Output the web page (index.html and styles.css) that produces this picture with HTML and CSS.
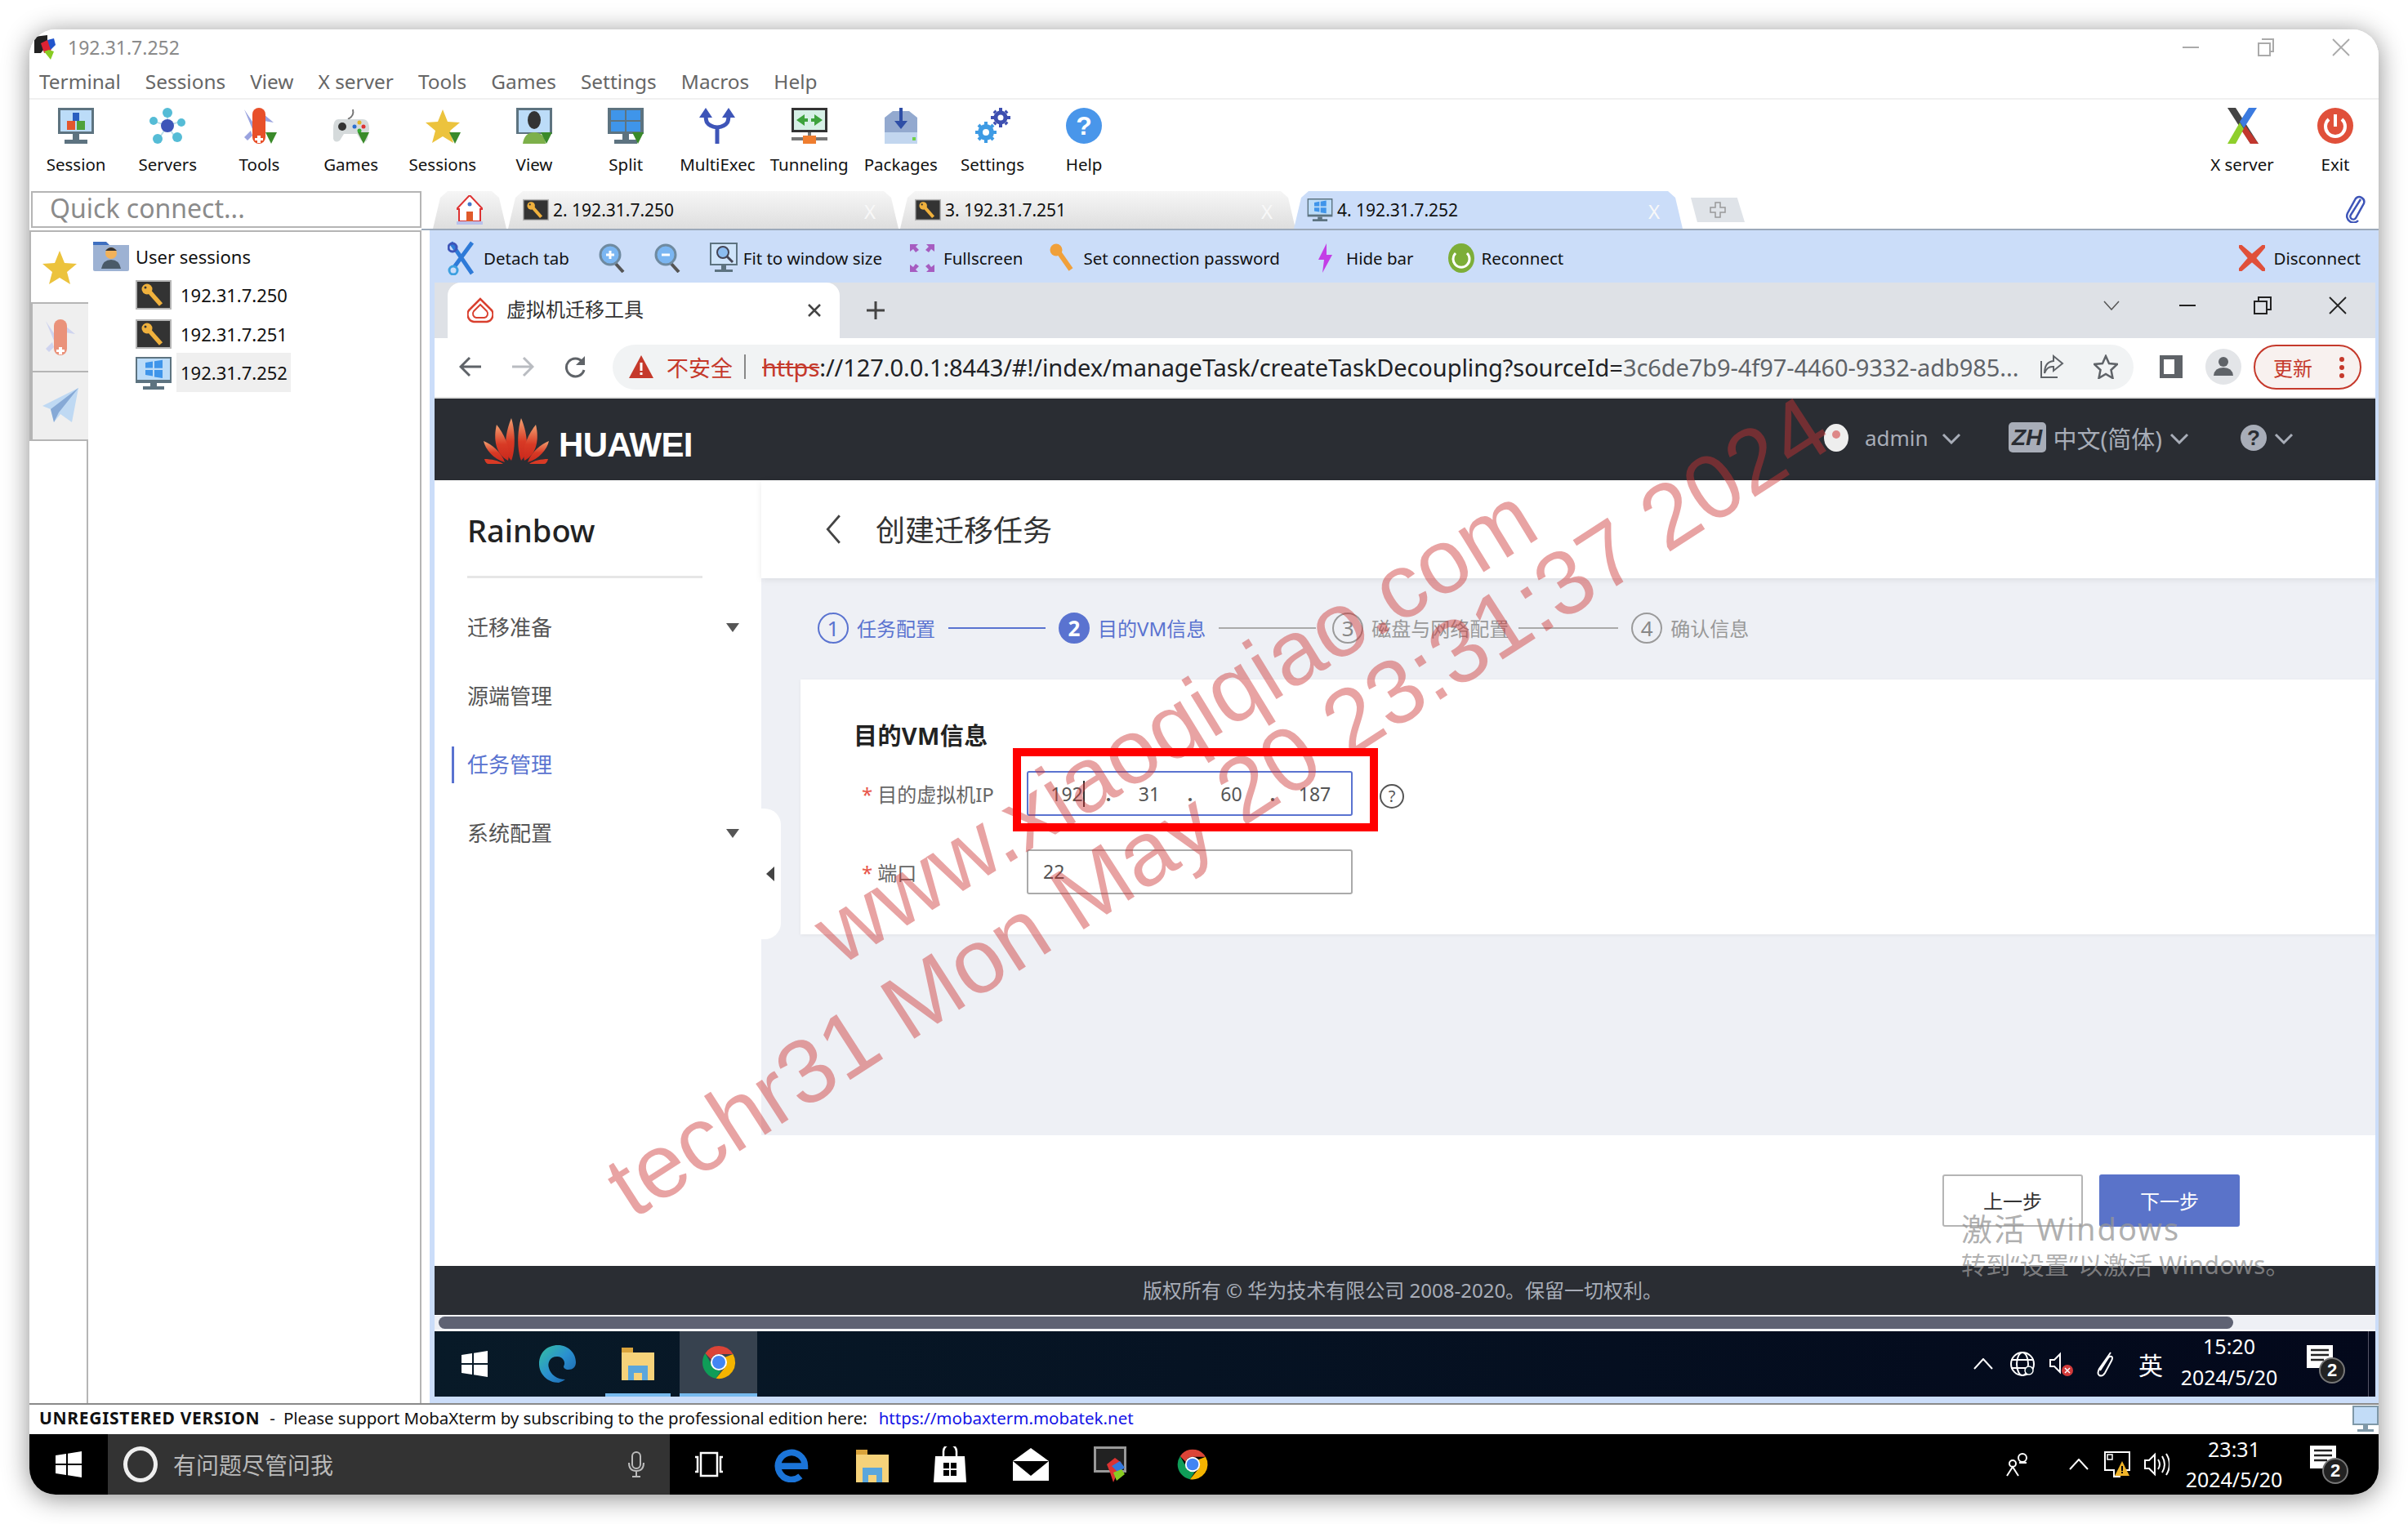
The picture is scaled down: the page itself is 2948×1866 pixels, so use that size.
FILE: index.html
```html
<!DOCTYPE html>
<html lang="zh">
<head>
<meta charset="utf-8">
<title>192.31.7.252</title>
<link rel="stylesheet" href="styles.css">
</head>
<body>
<svg class="defs" xmlns="http://www.w3.org/2000/svg">
  <defs>
    <linearGradient id="edgeg" x1="0" y1="0" x2="1" y2="1"><stop offset="0" stop-color="#35c1a0"/><stop offset=".5" stop-color="#2a90d0"/><stop offset="1" stop-color="#1a5fa8"/></linearGradient>
    <linearGradient id="petal" x1="0" y1="0" x2="0" y2="1"><stop offset="0" stop-color="#f2a070"/><stop offset=".55" stop-color="#d83a25"/><stop offset="1" stop-color="#c9281c"/></linearGradient>
    <symbol id="key" viewBox="0 0 44 36"><rect width="44" height="36" fill="#b5b5b5"/><rect x="2" y="2" width="40" height="32" fill="#333"/><path d="M16 13l15 17" stroke="#f0b13d" stroke-width="5.500"/><circle cx="14" cy="11" r="6.500" fill="#f0b13d"/><circle cx="12" cy="9" r="1.500" fill="#333"/></symbol>
    <symbol id="winmon" viewBox="0 0 44 40"><path d="M0 0h44v32H0z" fill="#5d7380"/><path d="M2 2h40v26H2z" fill="#bcdcf8"/><path d="M12 7l9-1.500v8h-9zM23 5.200l10-1.500v10H23zM12 16h9v7.500l-9-1.500zM23 16h10v10l-10-1.500z" fill="#3f95ea"/><path d="M18 32h8v4h-8zM9 36h26v4H9z" fill="#5d7380"/></symbol>
    <symbol id="tri" viewBox="0 0 14 14"><path d="M0 0h14L7 14z" fill="#3a8a2a"/></symbol>
    <symbol id="chrome" viewBox="0 0 24 24"><path d="M12 2a10 10 0 0 1 8.700 5H12a5 5 0 0 0-4.700 3.200L3.700 6.500A10 10 0 0 1 12 2z" fill="#db4437"/><path d="M2 12a10 10 0 0 1 1.700-5.500L8 14a5 5 0 0 0 5.500 3L10.300 21.900A10 10 0 0 1 2 12z" fill="#0f9d58"/><path d="M20.700 7A10 10 0 0 1 10.300 21.900L15.500 15.500a5 5 0 0 0 0-6.500z" fill="#f4b400"/><circle cx="12" cy="12" r="5" fill="#fff"/><circle cx="12" cy="12" r="4" fill="#4285f4"/></symbol>
    <symbol id="winlogo" viewBox="0 0 32 32"><path d="M0 5l13-2v12H0zM15 2.700L32 0v15H15zM0 17h13v12L0 27zM15 17h17v15l-17-2.700z" fill="#fff"/></symbol>
    <symbol id="folder" viewBox="0 0 44 44"><path d="M2 4h14v6h26v34H2z" fill="#f6d27a"/><path d="M2 4h14v6H2z" fill="#d9a33c"/><path d="M10 26h24v18h-7v-9h-10v9h-7z" fill="#5aa6dc"/></symbol>
    <symbol id="notif" viewBox="0 0 50 50"><path d="M0 0h32v28H24l-8 8v-8H0z" fill="#fff" transform="translate(0 2)"/><path d="M5 8h22M5 14h22M5 20h16" stroke="#222" stroke-width="2.500"/><circle cx="31" cy="33" r="15" fill="#222" stroke="#777" stroke-width="2"/></symbol>
  </defs>
</svg>

<div class="win">
  <header class="titlebar">
    <svg class="ttl-ic" viewBox="0 0 30 30"><path d="M0 2l16-2v12L8 22H0z" fill="#222"/><path d="M8 10l8-4 6 4-2 10-8 2z" fill="#d23"/><path d="M16 6l8-2 2 8-6 6z" fill="#25c"/><path d="M12 20l6-2 6 2-4 10z" fill="#8c2"/></svg>
    <span class="ttl-text">192.31.7.252</span>
    <span class="spacer"></span>
    <svg class="wc wc1" viewBox="0 0 22 22"><path d="M1 11h20" stroke="#aaa" stroke-width="2"/></svg>
    <svg class="wc wc2" viewBox="0 0 22 22"><path d="M6 1h14v15h-4M2 6h14v15H2z" fill="none" stroke="#aaa" stroke-width="2"/></svg>
    <svg class="wc wc3" viewBox="0 0 22 22"><path d="M1 1l20 20M21 1L1 21" stroke="#aaa" stroke-width="1.800"/></svg>
  </header>
  <nav class="menubar">
    <span>Terminal</span><span>Sessions</span><span>View</span><span>X server</span><span>Tools</span><span>Games</span><span>Settings</span><span>Macros</span><span>Help</span>
  </nav>
  <div class="toolbar">
    <div class="tool"><svg class="ti" viewBox="0 0 44 44"><path d="M0 0h44v32H0z" fill="#5d7380"/><path d="M3 3h38v26H3z" fill="#bcdcf8"/><path d="M18 6h8v10h-8z" fill="#2b5fc0"/><path d="M11 16h10v11H11z" fill="#e4572e"/><path d="M23 16h10v11H23z" fill="#4fa23a"/><path d="M18 32h8v7h-8zM8 39h28v5H8z" fill="#5d7380"/></svg><span>Session</span></div>
    <div class="tool"><svg class="ti" viewBox="0 0 44 44"><path d="M22 6v16M4 16l18 6M40 16l-18 6M10 40l12-18M34 40L22 22" stroke="#bfe0ea" stroke-width="2"/><circle cx="22" cy="22" r="8" fill="#3e55b8"/><circle cx="22" cy="6" r="6" fill="#55bcd6"/><circle cx="5" cy="16" r="5" fill="#55bcd6"/><circle cx="39" cy="18" r="5" fill="#55bcd6"/><circle cx="10" cy="38" r="6" fill="#55bcd6"/><circle cx="34" cy="36" r="6" fill="#55bcd6"/></svg><span>Servers</span></div>
    <div class="tool"><svg class="ti" viewBox="0 0 44 44"><path d="M4 2l12 18-2 6zM40 18L28 8v8zM4 36l8-8 2 6-6 6z" fill="#9aa3df"/><rect x="14" y="0" width="16" height="44" rx="8" fill="#e8502a"/><path d="M20 34h4v3h3v3h-3v3h-4v-3h-3v-3h3z" fill="#fff"/><use href="#tri" x="30" y="30" width="14" height="14"/></svg><span>Tools</span></div>
    <div class="tool"><svg class="ti" viewBox="0 0 44 44"><path d="M24 2q2 8-6 12" fill="none" stroke="#777" stroke-width="2"/><path d="M6 14h30q8 0 8 12l-2 12q-2 6-8 2l-5-8H13l-5 8q-6 4-8-2v-12Q0 14 6 14z" fill="#d5dadb"/><circle cx="11" cy="23" r="5" fill="#333"/><circle cx="26" cy="23" r="2.500" fill="#2b6fd0"/><circle cx="32" cy="18" r="2.500" fill="#e2b52a"/><circle cx="37" cy="23" r="2.500" fill="#d33"/><circle cx="32" cy="28" r="2.500" fill="#3a3"/><use href="#tri" x="30" y="30" width="14" height="14"/></svg><span>Games</span></div>
    <div class="tool"><svg class="ti" viewBox="0 0 44 44"><path d="M22 2l6 15 15 1-12 10 4 15-13-8-13 8 4-15L1 18l15-1z" fill="#ecc33d"/><use href="#tri" x="30" y="30" width="14" height="14"/></svg><span>Sessions</span></div>
    <div class="tool"><svg class="ti" viewBox="0 0 44 44"><path d="M0 0h44v32H0z" fill="#5d7380"/><path d="M3 3h38v27H3z" fill="#bcdcf8"/><ellipse cx="22" cy="15" rx="8" ry="11" fill="#333"/><path d="M8 44q2-14 14-14t14 14z" fill="#7db04a"/><use href="#tri" x="30" y="30" width="14" height="14"/></svg><span>View</span></div>
    <div class="tool"><svg class="ti" viewBox="0 0 44 44"><path d="M0 0h44v32H0z" fill="#5d7380"/><path d="M4 3h17v12H4zM23 3h17v12H23zM4 17h17v12H4zM23 17h17v12H23z" fill="#3f95ea"/><path d="M18 32h8v7h-8zM8 39h28v5H8z" fill="#5d7380"/><use href="#tri" x="30" y="30" width="14" height="14"/></svg><span>Split</span></div>
    <div class="tool"><svg class="ti" viewBox="0 0 44 44"><path d="M22 44V24M22 24C8 22 8 16 8 8M22 24c14-2 14-8 14-16" fill="none" stroke="#3e55b8" stroke-width="5"/><path d="M8 0l8 12H0zM36 0l8 12H28z" fill="#3e55b8"/></svg><span>MultiExec</span></div>
    <div class="tool"><svg class="ti" viewBox="0 0 44 44"><path d="M0 0h44v30H0z" fill="#333"/><path d="M3 3h38v24H3z" fill="#d6f0e6"/><path d="M6 15l10-7v5h4v4h-4v5zM38 15l-10-7v5h-4v4h4v5z" fill="#3da23c"/><path d="M20 30h4v6h-4zM0 36h44v4H0z" fill="#777"/><path d="M14 34h16v10H14z" fill="#ef7d2f"/></svg><span>Tunneling</span></div>
    <div class="tool"><svg class="ti" viewBox="0 0 44 44"><path d="M2 12l10-8h20l10 8v20H2z" fill="#93a9cf"/><path d="M2 30h40v14H2z" fill="#c2d6ef"/><path d="M36 36h4v4h-4z" fill="#6fd048"/><path d="M20 0h4v16h6l-8 10-8-10h6z" fill="#2e4ea6"/></svg><span>Packages</span></div>
    <div class="tool"><svg class="ti" viewBox="0 0 44 44"><g fill="none" stroke="#3e9be4" stroke-width="6"><circle cx="14" cy="30" r="7"/><path stroke-width="4" d="M14 17v4M14 39v4M1 30h4M23 30h4M5 21l3 3M20 36l3 3M23 21l-3 3M8 36l-3 3"/></g><g fill="none" stroke="#3e4fb0" stroke-width="5"><circle cx="32" cy="12" r="6"/><path stroke-width="4" d="M32 0v4M32 20v4M20 12h4M40 12h4M24 4l2 2M38 18l2 2M40 4l-2 2M26 18l-2 2"/></g></svg><span>Settings</span></div>
    <div class="tool"><svg class="ti" viewBox="0 0 44 44"><circle cx="22" cy="22" r="22" fill="#4996ea"/><text x="22" y="33" text-anchor="middle" class="help-q">?</text></svg><span>Help</span></div>
    <span class="spacer"></span>
    <div class="tool tool-x"><svg class="ti" viewBox="0 0 44 44"><path d="M4 0h10l28 44H32z" fill="#444"/><path d="M30 0h10L24 25l-5-8z" fill="#3b7be0"/><path d="M4 44h10l10-18-5-8z" fill="#8fcf2c"/><path d="M26 22l16 22H32l-10-15z" fill="#d8352a" opacity=".85"/></svg><span>X server</span></div>
    <div class="tool tool-exit"><svg class="ti" viewBox="0 0 44 44"><circle cx="22" cy="22" r="22" fill="#e0503a"/><path d="M14 14a12 12 0 1 0 16 0" fill="none" stroke="#fff" stroke-width="4"/><path d="M22 8v15" stroke="#fff" stroke-width="4"/></svg><span>Exit</span></div>
  </div>

  <div class="tabrow">
    <div class="quick">Quick connect...</div>
    <div class="tabs">
      <div class="tab tab-home"><svg class="home-ic" viewBox="0 0 32 36"><path d="M16 0L0 17h3v15h26V17h3z" fill="#fff" stroke="#d33" stroke-width="2"/><path d="M12 20h8v13h-8z" fill="#e05a2b"/><circle cx="16" cy="11" r="2.500" fill="#47c"/><path d="M0 32h32v4H0z" fill="#b9c1ea"/></svg></div>
      <div class="tab tab-s"><svg class="tab-ic"><use href="#key"/></svg><span>2. 192.31.7.250</span><i class="tab-x">X</i></div>
      <div class="tab tab-s"><svg class="tab-ic"><use href="#key"/></svg><span>3. 192.31.7.251</span><i class="tab-x">X</i></div>
      <div class="tab tab-s tab-active"><svg class="tab-ic"><use href="#winmon"/></svg><span>4. 192.31.7.252</span><i class="tab-x">X</i></div>
      <div class="tab tab-new"><svg class="plus-ic" viewBox="0 0 20 20"><path d="M7 1h6v6h6v6h-6v6H7v-6H1V7h6z" fill="none" stroke="#999" stroke-width="1.500"/></svg></div>
      <span class="spacer"></span>
      <svg class="clip" viewBox="0 0 24 34"><path d="M18 5L6 24a3.500 3.500 0 0 0 6 4L22 10a6 6 0 0 0-10-6L2 22a8 8 0 0 0 13 9" fill="none" stroke="#3e55b8" stroke-width="2.500"/></svg>
    </div>
  </div>

  <div class="mainrow">
    <aside class="leftpane">
      <div class="side-tabs">
        <div class="stab stab-on"><svg class="stab-ic" viewBox="0 0 44 44"><path d="M22 2l6 15 15 1-12 10 4 15-13-8-13 8 4-15L1 18l15-1z" fill="#ecc33d"/></svg></div>
        <div class="stab"><svg class="stab-ic" viewBox="0 0 44 44"><path d="M4 2l12 18-2 6zM40 18L28 8v8zM4 36l8-8 2 6-6 6z" fill="#cfd4ef"/><rect x="14" y="0" width="16" height="44" rx="8" fill="#ea927a"/><path d="M20 34h4v3h3v3h-3v3h-4v-3h-3v-3h3z" fill="#fff"/></svg></div>
        <div class="stab"><svg class="stab-ic" viewBox="0 0 44 44"><path d="M44 0L0 22l10 4 4 16 8-10 14 10z" fill="#bfd9f3"/><path d="M44 0L10 26l4 16 6-12z" fill="#86a9d6"/></svg></div>
      </div>
      <div class="tree">
        <div class="node-root"><svg class="folder-ic" viewBox="0 0 44 36"><path d="M0 0h16l4 4H0z" fill="#3e6fc0"/><path d="M0 4h44v30q0 2-2 2H2q-2 0-2-2z" fill="#9db2d3"/><circle cx="22" cy="14" r="7" fill="#f2b25a"/><path d="M15 11q7-8 14 0z" fill="#333"/><path d="M10 33q2-11 12-11t12 11z" fill="#4a5a68"/></svg><span>User sessions</span></div>
        <div class="node"><svg class="node-ic"><use href="#key"/></svg><span class="node-t">192.31.7.250</span></div>
        <div class="node"><svg class="node-ic"><use href="#key"/></svg><span class="node-t">192.31.7.251</span></div>
        <div class="node node-sel"><svg class="node-ic"><use href="#winmon"/></svg><span class="node-t">192.31.7.252</span></div>
      </div>
    </aside>

    <section class="remote">
      <div class="sessbar">
        <svg class="sb-ic sb-a" viewBox="0 0 34 42"><path d="M30 2L8 32M4 2l26 38" stroke="#2e7ad8" stroke-width="5" fill="none"/><circle cx="6" cy="8" r="5" fill="none" stroke="#3e55b8" stroke-width="3"/><circle cx="7" cy="36" r="5" fill="none" stroke="#3da0e0" stroke-width="3"/></svg><span class="sb-t sb-detach">Detach tab</span>
        <svg class="sb-ic sb-zi" viewBox="0 0 32 36"><path d="M20 24l10 11" stroke="#555" stroke-width="4"/><circle cx="14" cy="14" r="12" fill="#7bb6f2" stroke="#6f8aa0" stroke-width="3"/><path d="M9 14h10M14 9v10" stroke="#fff" stroke-width="3"/></svg>
        <svg class="sb-ic sb-zo" viewBox="0 0 32 36"><path d="M20 24l10 11" stroke="#555" stroke-width="4"/><circle cx="14" cy="14" r="12" fill="#7bb6f2" stroke="#6f8aa0" stroke-width="3"/><path d="M9 14h10" stroke="#fff" stroke-width="3"/></svg>
        <svg class="sb-ic sb-fit" viewBox="0 0 34 38"><path d="M0 0h34v28H0z" fill="#5d7380"/><path d="M2 2h30v24H2z" fill="#cfe4fa"/><circle cx="16" cy="12" r="7" fill="#8cbcf0" stroke="#445" stroke-width="2"/><path d="M21 17l7 7" stroke="#445" stroke-width="3"/><path d="M14 28h6v5h-6zM6 33h22v3H6z" fill="#5d7380"/></svg><span class="sb-t sb-fitt">Fit to window size</span>
        <svg class="sb-ic sb-full" viewBox="0 0 30 34"><path d="M0 0h10L7 3l4 4-4 3-3-4-4 3zM30 0H20l3 3-4 4 4 3 3-4 4 3zM0 34h10l-3-3 4-4-4-3-3 4-4-3zM30 34H20l3-3-4-4 4-3 3 4 4-3z" fill="#a65cc0"/></svg><span class="sb-t sb-fullt">Fullscreen</span>
        <svg class="sb-ic sb-key" viewBox="0 0 30 36"><path d="M12 12l14 20" stroke="#f0a03a" stroke-width="6"/><circle cx="8" cy="8" r="7.500" fill="#f0a03a"/></svg><span class="sb-t sb-pass">Set connection password</span>
        <svg class="sb-ic sb-bolt" viewBox="0 0 18 36"><path d="M10 0L0 20h7L5 36l12-22h-7z" fill="#c33ee6"/></svg><span class="sb-t sb-hide">Hide bar</span>
        <svg class="sb-ic sb-rec" viewBox="0 0 32 36"><ellipse cx="16" cy="18" rx="16" ry="18" fill="#7dae38"/><path d="M9 12a10 10 0 1 0 14 0" fill="none" stroke="#fff" stroke-width="3"/></svg><span class="sb-t sb-rect">Reconnect</span>
        <span class="spacer"></span>
        <svg class="sb-ic sb-disc" viewBox="0 0 32 32"><path d="M2 0l14 12L30 0l2 2-12 14 12 14-2 2-14-12L2 32l-2-2 12-14L0 2z" fill="#e0503a" stroke="#e0503a" stroke-width="2"/></svg><span class="sb-t sb-disct">Disconnect</span>
      </div>

      <div class="screen">
        <div class="ch-strip">
          <div class="ch-tab">
            <svg class="ch-fav" viewBox="0 0 32 32"><path d="M16 2L4 14a9 9 0 0 0 4 16h16a9 9 0 0 0 4-16z" fill="none" stroke="#d9402f" stroke-width="2.500"/><path d="M16 9L8 17a5 5 0 0 0 3 8h10a5 5 0 0 0 3-8z" fill="none" stroke="#d9402f" stroke-width="2"/></svg>
            <span class="ch-title">虚拟机迁移工具</span>
            <svg class="ch-x" viewBox="0 0 16 16"><path d="M1 1l14 14M15 1L1 15" stroke="#444" stroke-width="2.500"/></svg>
          </div>
          <svg class="ch-plus" viewBox="0 0 24 24"><path d="M12 1v22M1 12h22" stroke="#444" stroke-width="3"/></svg>
          <span class="spacer"></span>
          <svg class="ch-chev" viewBox="0 0 20 12"><path d="M1 1l9 10 9-10" fill="none" stroke="#555" stroke-width="1.500"/></svg>
          <svg class="ch-wc wcm" viewBox="0 0 22 22"><path d="M1 11h20" stroke="#222" stroke-width="2"/></svg>
          <svg class="ch-wc wcr" viewBox="0 0 22 22"><path d="M6 5V1h15v15h-5M1 6h15v15H1z" fill="none" stroke="#222" stroke-width="2"/></svg>
          <svg class="ch-wc wcc" viewBox="0 0 22 22"><path d="M1 1l20 20M21 1L1 21" stroke="#222" stroke-width="1.800"/></svg>
        </div>
        <div class="ch-addr">
          <svg class="nav nav-b" viewBox="0 0 28 28"><path d="M27 14H3M13 3L2 14l11 11" fill="none" stroke="#5f6368" stroke-width="3"/></svg>
          <svg class="nav nav-f" viewBox="0 0 28 28"><path d="M1 14h24M15 3l11 11-11 11" fill="none" stroke="#b9bcc1" stroke-width="3"/></svg>
          <svg class="nav nav-r" viewBox="0 0 28 28"><path d="M23 8a11 11 0 1 0 2 10" fill="none" stroke="#5f6368" stroke-width="3"/><path d="M26 1v11H15z" fill="#5f6368"/></svg>
          <div class="urlbar">
            <svg class="warn" viewBox="0 0 30 28"><path d="M15 0l15 28H0z" fill="#c5392b"/><path d="M13.500 9h3v10h-3zM13.500 21h3v3h-3z" fill="#fff"/></svg>
            <span class="insecure">不安全</span>
            <i class="sep"></i>
            <span class="url"><s class="https">https</s>://127.0.0.1:8443/#!/index/manageTask/createTaskDecoupling?sourceId=<span class="url-dim">3c6de7b9-4f97-4460-9332-adb985...</span></span>
            <span class="spacer"></span>
            <svg class="ub-ic ub-share" viewBox="0 0 30 30"><path d="M17 2l11 9-11 9v-5q-8-1-11 8 0-14 11-15zM2 8v20h20" fill="none" stroke="#5f6368" stroke-width="2"/></svg>
            <svg class="ub-ic ub-star" viewBox="0 0 30 30"><path d="M15 2l4 9 10 1-7.500 7 2 10L15 24l-8.500 5 2-10L1 12l10-1z" fill="none" stroke="#5f6368" stroke-width="2.500"/></svg>
          </div>
          <svg class="panel-ic" viewBox="0 0 28 28"><path d="M0 0h28v28H0z" fill="#5f6368"/><path d="M5 5h13v18H5z" fill="#fff"/></svg>
          <svg class="avatar" viewBox="0 0 44 44"><circle cx="22" cy="22" r="22" fill="#e3e5e8"/><circle cx="22" cy="16" r="6" fill="#5f6368"/><path d="M10 33q1-10 12-10t12 10z" fill="#5f6368"/></svg>
          <div class="update"><span class="upd-t">更新</span><span class="upd-dots"></span></div>
        </div>
        <div class="hw-head">
          <svg class="hw-flower" viewBox="0 0 80 56"><path d="M34 52C22 40 28 14 34 0c4 12 6 36 0 52z" fill="url(#petal)"/><path d="M46 52c12-12 6-38 0-52-4 12-6 36 0 52z" fill="url(#petal)"/><path d="M30 52C14 44 12 24 16 8c8 10 18 28 14 44z" fill="url(#petal)"/><path d="M50 52c16-8 18-28 14-44-8 10-18 28-14 44z" fill="url(#petal)"/><path d="M26 54C12 50 2 38 0 28c10 4 22 14 26 26z" fill="url(#petal)"/><path d="M54 54c14-4 24-16 26-26-10 4-22 14-26 26z" fill="url(#petal)"/><path d="M24 56H6c-2 0-4-2-5-6 8 0 18 2 23 6zM56 56h18c2 0 4-2 5-6-8 0-18 2-23 6z" fill="#d83a25"/></svg>
          <span class="hw-name">HUAWEI</span>
          <span class="spacer"></span>
          <svg class="hw-av" viewBox="0 0 30 34"><ellipse cx="15" cy="17" rx="15" ry="17" fill="#eee"/><circle cx="15" cy="13" r="5" fill="#d88"/></svg>
          <span class="hw-admin">admin</span>
          <svg class="hw-chev hc1" viewBox="0 0 24 14"><path d="M2 2l10 10 10-10" fill="none" stroke="#a8adb8" stroke-width="3"/></svg>
          <span class="hw-zh">ZH</span>
          <span class="hw-lang">中文(简体)</span>
          <svg class="hw-chev hc2" viewBox="0 0 24 14"><path d="M2 2l10 10 10-10" fill="none" stroke="#a8adb8" stroke-width="3"/></svg>
          <span class="hw-q">?</span>
          <svg class="hw-chev hc3" viewBox="0 0 24 14"><path d="M2 2l10 10 10-10" fill="none" stroke="#a8adb8" stroke-width="3"/></svg>
        </div>
        <div class="hw-body">
          <aside class="hw-side">
            <div class="brand">Rainbow</div>
            <div class="side-rule"></div>
            <div class="mi">迁移准备<i class="caret"></i></div>
            <div class="mi">源端管理</div>
            <div class="mi mi-on">任务管理</div>
            <div class="mi">系统配置<i class="caret"></i></div>
            <div class="handle"><i class="handle-tri"></i></div>
          </aside>
          <div class="hw-content">
            <div class="page-head">
              <svg class="back" viewBox="0 0 18 34"><path d="M16 2L3 17l13 15" fill="none" stroke="#444" stroke-width="2.500"/></svg>
              <h1>创建迁移任务</h1>
            </div>
            <div class="page-main">
              <div class="steps">
                <i class="st st-done">1</i><span class="sl sl-on">任务配置</span><i class="ln ln-on"></i>
                <i class="st st-cur">2</i><span class="sl sl-on">目的VM信息</span><i class="ln ln-2"></i>
                <i class="st">3</i><span class="sl">磁盘与网络配置</span><i class="ln ln-3"></i>
                <i class="st">4</i><span class="sl">确认信息</span>
              </div>
              <div class="card">
                <h2>目的VM信息</h2>
                <div class="frow frow-ip">
                  <label class="flabel"><b>*</b>目的虚拟机IP</label>
                  <div class="ipbox">
                    <span class="oct oct-cur">192<i class="cursor"></i></span><span class="dot">.</span>
                    <span class="oct">31</span><span class="dot">.</span>
                    <span class="oct">60</span><span class="dot">.</span>
                    <span class="oct">187</span>
                    <div class="redbox"></div>
                  </div>
                  <span class="qmark">?</span>
                </div>
                <div class="frow frow-port">
                  <label class="flabel"><b>*</b>端口</label>
                  <div class="portbox">22</div>
                </div>
              </div>
            </div>
            <div class="actions">
              <button class="btn btn-prev">上一步</button>
              <button class="btn btn-next">下一步</button>
            </div>
          </div>
        </div>
        <footer class="hw-foot">版权所有 © 华为技术有限公司 2008-2020。保留一切权利。</footer>
        <div class="hscroll"><div class="hthumb"></div></div>
        <div class="rtask">
          <svg class="rt-win" viewBox="0 0 32 32"><use href="#winlogo"/></svg>
          <div class="rt-cell rt-edge"><svg class="rt-ic" viewBox="0 0 48 48"><path d="M2 24C2 10 12 1 25 1c13 0 22 10 22 21 0 6-4 9-9 9-4 0-6-2-6-4 3-4 0-12-8-12-9 0-12 8-10 14 2 8 10 14 20 14a22 22 0 0 1-8 4C12 47 2 36 2 24z" fill="url(#edgeg)"/></svg></div>
          <div class="rt-cell rt-files"><svg class="rt-ic" viewBox="0 0 44 44"><use href="#folder"/></svg></div>
          <div class="rt-cell rt-chrome"><svg class="rt-ic" viewBox="0 0 24 24"><use href="#chrome"/></svg></div>
          <span class="spacer"></span>
          <svg class="tr tr-up" viewBox="0 0 24 14"><path d="M1 13L12 1l11 12" fill="none" stroke="#fff" stroke-width="2"/></svg>
          <svg class="tr tr-globe" viewBox="0 0 32 32"><circle cx="16" cy="16" r="14" fill="none" stroke="#fff" stroke-width="2"/><ellipse cx="16" cy="16" rx="7" ry="14" fill="none" stroke="#fff" stroke-width="2"/><path d="M2 11h28M2 21h28" stroke="#fff" stroke-width="2"/><circle cx="24" cy="24" r="5" fill="#0a1a28" stroke="#fff" stroke-width="1.500"/></svg>
          <svg class="tr tr-spk" viewBox="0 0 32 32"><path d="M2 11h5l7-7v22l-7-7H2z" fill="none" stroke="#fff" stroke-width="2"/><circle cx="23" cy="24" r="7" fill="#d23a3a"/><path d="M20 21l6 6M26 21l-6 6" stroke="#fff" stroke-width="1.500"/></svg>
          <svg class="tr tr-pen" viewBox="0 0 32 32"><path d="M22 2l-14 20q-3 6 0 8 4 2 7-3l8-15q2-4 0-5-3-1-5 3L9 24" fill="none" stroke="#fff" stroke-width="2"/></svg>
          <span class="rt-ime">英</span>
          <div class="clock rt-clock"><span>15:20</span><span>2024/5/20</span></div>
          <div class="nt"><svg viewBox="0 0 50 50"><use href="#notif"/></svg><span class="nt-n">2</span></div>
        </div>
      </div>
    </section>
  </div>

  <div class="status">
    <b>UNREGISTERED VERSION</b><span class="st-dash">-</span><span class="st-msg">Please support MobaXterm by subscribing to the professional edition here:</span><a class="st-link">https://mobaxterm.mobatek.net</a>
    <span class="spacer"></span>
    <svg class="st-mon" viewBox="0 0 32 34"><path d="M1 1h30v22H1z" fill="#c2dcf7" stroke="#7f98a8" stroke-width="2"/><path d="M13 24h6v5h-6zM6 29h20v3H6z" fill="#7f98a8"/></svg>
  </div>

  <div class="taskbar">
    <div class="tb-start"><svg class="tb-win" viewBox="0 0 32 32"><use href="#winlogo"/></svg></div>
    <div class="tb-search">
      <i class="cortana"></i>
      <span class="tb-ph">有问题尽管问我</span>
      <span class="spacer"></span>
      <svg class="mic" viewBox="0 0 20 32"><rect x="5" y="1" width="10" height="20" rx="5" fill="none" stroke="#bbb" stroke-width="2"/><path d="M1 14q0 10 9 10t9-10M10 24v7M5 31h10" fill="none" stroke="#bbb" stroke-width="2"/></svg>
    </div>
    <div class="tb-apps">
      <svg class="tb-tv" viewBox="0 0 40 32"><path d="M10 2h20v28H10zM3 7H6v18H3M37 7h-3v18h3" fill="none" stroke="#fff" stroke-width="2.500"/></svg>
      <svg class="tb-a tb-e" viewBox="0 0 40 40"><path d="M4 22h30A15 15 0 1 0 29 33" fill="none" stroke="#1b74d8" stroke-width="7"/></svg>
      <svg class="tb-a tb-fld" viewBox="0 0 44 44"><use href="#folder"/></svg>
      <svg class="tb-a" viewBox="0 0 40 44"><path d="M12 12V6a8 8 0 0 1 16 0v6" fill="none" stroke="#fff" stroke-width="2.500"/><path d="M2 12h36l2 32H0z" fill="#fff"/><path d="M12 20h7v7h-7zM21 20h7v7h-7zM12 29h7v7h-7zM21 29h7v7h-7z" fill="#000"/></svg>
      <svg class="tb-a" viewBox="0 0 44 44"><path d="M22 2L44 18v24H0V18z" fill="#fff"/><path d="M0 18h44L22 36z" fill="#000"/></svg>
      <svg class="tb-a" viewBox="0 0 44 44"><path d="M0 0h40v32H0z" fill="#999"/><path d="M3 3h34v26H3z" fill="#222"/><path d="M16 22l10-8 8 6-4 10-6 14-4-12z" fill="#d33"/><path d="M22 24l10-6 6 8-8 6z" fill="#37d"/><path d="M24 32l10-4 4 6-10 8z" fill="#8c2"/></svg>
      <svg class="tb-a" viewBox="0 0 24 24"><use href="#chrome"/></svg>
    </div>
    <span class="spacer"></span>
    <svg class="tr tr-people" viewBox="0 0 32 32"><circle cx="22" cy="8" r="5" fill="none" stroke="#fff" stroke-width="2"/><circle cx="10" cy="15" r="4" fill="none" stroke="#fff" stroke-width="2"/><path d="M3 30l7-11 7 11M18 14l9 0" fill="none" stroke="#fff" stroke-width="2"/></svg>
    <svg class="tr tr-up2" viewBox="0 0 24 14"><path d="M1 13L12 1l11 12" fill="none" stroke="#fff" stroke-width="2"/></svg>
    <svg class="tr tr-net" viewBox="0 0 32 32"><path d="M1 1h30v22H19v8H12V23H1z" fill="none" stroke="#fff" stroke-width="2"/><path d="M4 4h6v6H4z" fill="none" stroke="#fff" stroke-width="1.500"/><path d="M22 12l9 18H13z" fill="#f0b429"/><path d="M21 18h2v6h-2zM21 25h2v2h-2z" fill="#000"/></svg>
    <svg class="tr tr-vol" viewBox="0 0 32 32"><path d="M2 11h5l7-7v24l-7-7H2z" fill="none" stroke="#fff" stroke-width="2"/><path d="M18 10q4 6 0 12M23 6q6 10 0 20M28 3q8 13 0 26" fill="none" stroke="#fff" stroke-width="2"/></svg>
    <div class="clock tb-clock"><span>23:31</span><span>2024/5/20</span></div>
    <div class="nt nt-host"><svg viewBox="0 0 50 50"><use href="#notif"/></svg><span class="nt-n">2</span></div>
  </div>

  <div class="wm">
    <span class="wm1">www.xiaoqiqiao.com</span>
    <span class="wm2">techr31 Mon May 20 23:31:37 2024</span>
  </div>
  <div class="activate">
    <span class="act1">激活 Windows</span>
    <span class="act2">转到“设置”以激活 Windows。</span>
  </div>
</div>
</body>
</html>
```
FILE: styles.css
```css
* { box-sizing: border-box; }
html, body { margin: 0; padding: 0; }
body {
  width: 2948px; height: 1866px; overflow: hidden; background: #fff;
  padding: 36px;
  font-family: "Noto Sans", "Noto Sans CJK SC", sans-serif;
  color: #111;
}
.defs { position: absolute; width: 0; height: 0; }
i { font-style: normal; }
.spacer { flex: 1; }
svg { display: block; flex: none; }

.win {
  position: relative; width: 2876px; height: 1794px; background: #fff;
  border-radius: 32px; overflow: hidden;
  display: flex; flex-direction: column;
}
body::before {
  content: ""; position: absolute; left: 36px; top: 36px; width: 2876px; height: 1794px;
  border-radius: 32px; box-shadow: 0 4px 32px rgba(0,0,0,.45);
}

/* Title + menu */
.titlebar { height: 44px; display: flex; align-items: center; padding-left: 6px; flex: none; }
.ttl-ic { width: 30px; height: 30px; margin-right: 11px; }
.ttl-text { font-size: 23px; color: #8a8a8a; }
.wc { width: 22px; height: 22px; }
.wc1 { margin-right: 70px; }
.wc2 { margin-right: 70px; }
.wc3 { margin-right: 35px; }
.menubar { height: 42px; display: flex; align-items: center; gap: 30px; padding: 0 0 2px 12px; font-size: 24.400px; color: #666; border-bottom: 2px solid #f0f0f0; flex: none; }

/* Main toolbar */
.toolbar { height: 112px; display: flex; padding-top: 10px; flex: none; padding-left: 1px; }
.tool { width: 112.200px; display: flex; flex-direction: column; align-items: center; font-size: 20.500px; color: #111; }
.ti { width: 44px; height: 44px; margin-bottom: 11px; }
.help-q { font: bold 32px "Liberation Sans", sans-serif; fill: #fff; }
.tool-x { width: 100px; margin-right: 14px; }
.tool-exit { width: 100px; margin-right: 3px; }

/* Tab row */
.tabrow { height: 48px; display: flex; flex: none; }
.quick { width: 478px; height: 45px; margin-left: 2px; border: 2px solid #b5b5b5; padding-left: 21px; font-size: 32px; line-height: 37px; color: #8b8b8b; white-space: nowrap; }
.tabs { flex: 1; display: flex; align-items: flex-end; padding-left: 14px; border-bottom: 2px solid #9ba9ba; position: relative; height: 48px; }
.tab { height: 46px; background: linear-gradient(#f6f6f6, #dedede); display: flex; align-items: center; clip-path: polygon(0 100%, 9px 8px, 18px 0, calc(100% - 18px) 0, calc(100% - 9px) 8px, 100% 100%); flex: none; font-size: 21px; }
.tab-home { width: 90px; justify-content: center; margin-right: 2px; }
.home-ic { width: 32px; height: 36px; }
.tab-s { width: 478px; padding-left: 18px; margin-right: 4px; position: relative; }
.tab-s:nth-child(3) { width: 484px; margin-left: -2px; }
.tab-s span { margin-left: 5px; }
.tab-ic { width: 32px; height: 28px; }
.tab-x { position: absolute; right: 28px; top: 8px; color: #f8f8f8; font-size: 24px; }
.tab-active { background: #cbddf9; width: 476px; margin-left: -6px; margin-right: 10px; padding-left: 16px; }
.tab-new { width: 66px; height: 30px; margin-bottom: 8px; justify-content: center; background: #dfe3e8; clip-path: polygon(0 0, 86% 0, 100% 100%, 12% 100%); }
.plus-ic { width: 20px; height: 22px; }
.clip { width: 30px; height: 34px; margin: 0 13px 7px 0; }

/* Main row */
.mainrow { height: 1436px; display: flex; flex: none; }
.leftpane { width: 480px; flex: none; display: flex; border-top: 2px solid #b5b5b5; border-right: 2px solid #b5b5b5; margin-right: 10px; position: relative; }
.side-tabs { width: 72px; flex: none; border-right: 2px solid #b5b5b5; }
.stab { height: 84px; background: #efefef; border: 2px solid #b5b5b5; border-width: 0 0 2px 4px; display: flex; align-items: center; justify-content: center; margin-right: -2px; }
.stab-on { height: 88px; background: #fff; border-width: 0 0 2px 2px; }
.stab-ic { width: 44px; height: 44px; }
.tree { padding: 11px 0 0 6px; font-size: 22px; }
.node-root { display: flex; align-items: center; gap: 8px; height: 38px; }
.folder-ic { width: 44px; height: 36px; }
.node { display: flex; align-items: center; margin: 9px 0 0 52px; height: 38px; }
.node:nth-child(3) { margin-top: 10px; }
.node-ic { width: 44px; height: 36px; }
.node-t { margin-left: 11px; }
.node-sel { height: 48px; margin-top: 4px; }
.node-sel .node-ic { height: 40px; margin-top: 2px; }
.node-sel .node-t { margin-left: 6px; padding: 0 5px; width: 140px; line-height: 48px; background: #efefef; }

/* Remote pane */
.remote { flex: 1; background: #cbddf9; display: flex; flex-direction: column; }
.sessbar { height: 64px; display: flex; align-items: center; flex: none; font-size: 20.500px; padding: 4px 0 0 22px; }
.sb-t { color: #111; white-space: nowrap; }
.sb-a { width: 34px; height: 42px; margin-right: 10px; }
.sb-zi, .sb-zo { width: 32px; height: 36px; }
.sb-zi { margin-left: 36px; }
.sb-zo { margin-left: 36px; }
.sb-fit { width: 34px; height: 38px; margin-left: 36px; margin-right: 7px; }
.sb-full { width: 30px; height: 34px; margin-left: 34px; margin-right: 11px; }
.sb-key { width: 30px; height: 36px; margin-left: 33px; margin-right: 11px; }
.sb-bolt { width: 18px; height: 36px; margin-left: 47px; margin-right: 16px; }
.sb-rec { width: 32px; height: 36px; margin-left: 42px; margin-right: 9px; }
.sb-disc { width: 32px; height: 32px; margin-right: 11px; }
.sb-disct { margin-right: 22px; }

.screen { margin: 0 4px 0 6px; height: 1364px; display: flex; flex-direction: column; flex: none; background: #eef0f5; }
.ch-strip { height: 68px; background: #dee1e6; display: flex; align-items: center; flex: none; padding-left: 16px; }
.ch-tab { width: 480px; height: 68px; background: #fff; border-radius: 16px 16px 0 0; display: flex; align-items: center; padding-left: 24px; position: relative; }
.ch-fav { width: 32px; height: 32px; }
.ch-title { font-size: 24px; line-height: 30px; color: #333; margin: -2px 0 0 16px; }
.ch-x { position: absolute; left: 441px; top: 26px; width: 16px; height: 16px; }
.ch-plus { width: 24px; height: 24px; margin-left: 32px; }
.ch-chev { width: 20px; height: 12px; margin-right: 72px; margin-top: -12px; }
.ch-wc { width: 22px; height: 22px; margin-top: -12px; }
.wcm { margin-right: 70px; }
.wcr { margin-right: 70px; }
.wcc { margin-right: 35px; }
.ch-addr { height: 74px; background: #fff; display: flex; align-items: center; flex: none; padding: 0 0 2px 30px; border-bottom: 2px solid #e0e0e0; }
.nav { width: 28px; height: 28px; }
.nav-f { margin-left: 36px; }
.nav-r { margin-left: 36px; }
.urlbar { width: 1862px; height: 55px; margin-left: 32px; border-radius: 28px; background: #f1f3f4; display: flex; align-items: center; padding-left: 20px; flex: none; }
.warn { width: 30px; height: 28px; }
.insecure { font-size: 27px; color: #c5392b; margin-left: 16px; }
.sep { width: 2px; height: 30px; background: #888; margin: 0 20px 0 14px; }
.url { font-size: 29px; color: #202124; white-space: nowrap; letter-spacing: -.08px; }
.https { color: #c5392b; }
.url-dim { color: #5f6368; }
.ub-ic { width: 30px; height: 30px; }
.ub-share { margin-right: 36px; }
.ub-star { margin-right: 19px; }
.panel-ic { width: 28px; height: 30px; margin-left: 32px; }
.avatar { width: 44px; height: 44px; margin-left: 28px; }
.update { width: 132px; height: 55px; margin-left: 15px; border: 2px solid #c5392b; border-radius: 28px; background: #f8f1ef; display: flex; align-items: center; padding-left: 22px; color: #c5392b; font-size: 24px; flex: none; position: relative; }
.upd-dots { position: absolute; left: 103px; top: 13px; width: 6px; height: 6px; border-radius: 50%; background: #c5392b; box-shadow: 0 10px 0 #c5392b, 0 20px 0 #c5392b; }

/* Huawei app */
.hw-head { height: 100px; background: #2a2d33; display: flex; align-items: center; flex: none; padding-left: 60px; color: #a8adb8; }
.hw-flower { width: 80px; height: 56px; margin-top: 4px; }
.hw-name { font: bold 42px "Liberation Sans", sans-serif; color: #fff; margin: 14px 0 0 12px; letter-spacing: -.7px; }
.hw-av { width: 30px; height: 34px; margin-top: -4px; }
.hw-admin { font-size: 26px; margin: -4px 0 0 20px; }
.hw-chev { width: 24px; height: 14px; margin-top: -2px; }
.hc1 { margin-left: 16px; }
.hw-zh { width: 46px; height: 37px; background: #a8adb8; border-radius: 5px; color: #2a2d33; font: italic bold 28px/37px "Liberation Sans", sans-serif; text-align: center; margin: -6px 0 0 58px; }
.hw-lang { font-size: 29px; margin: -4px 0 0 9px; }
.hc2 { margin-left: 9px; }
.hw-q { width: 32px; height: 32px; border-radius: 50%; background: #a8adb8; color: #2a2d33; font: bold 26px/32px "Liberation Sans", sans-serif; text-align: center; margin: -4px 0 0 63px; }
.hc3 { margin: -2px 100px 0 9px; }

.hw-body { height: 962px; display: flex; flex: none; }
.hw-side { width: 400px; background: #fff; padding: 35px 0 0 40px; position: relative; flex: none; }
.brand { font-size: 38px; line-height: 52px; font-weight: 500; color: #222; }
.side-rule { width: 288px; height: 3px; background: #e6e6e6; margin: 30px 0 18px; }
.mi { height: 84px; line-height: 84px; font-size: 26px; color: #555; position: relative; }
.mi-on { color: #5a73d0; }
.mi-on::before { content: ""; position: absolute; left: -19px; top: 20px; width: 3px; height: 45px; background: #5a73d0; }
.caret { position: absolute; left: 317px; top: 37px; border: 8px solid transparent; border-top: 11px solid #555; border-bottom: 0; }
.handle { position: absolute; left: 400px; top: 402px; width: 24px; height: 160px; background: #fff; border-radius: 0 20px 20px 0; z-index: 1; }
.handle-tri { position: absolute; left: 6px; top: 71px; border: 9px solid transparent; border-right: 10px solid #444; border-left: 0; }

.hw-content { flex: 1; display: flex; flex-direction: column; }
.page-head { height: 120px; background: #fff; display: flex; align-items: center; padding-left: 77px; flex: none; box-shadow: 0 2px 8px rgba(0,0,0,.08); position: relative; }
.back { width: 22px; height: 38px; }
h1 { margin: -2px 0 0 41px; font-size: 36px; font-weight: 400; color: #333; }
.page-main { flex: 1; background: #eef0f5; }
.steps { height: 124px; display: flex; align-items: center; padding: 0 0 3px 69px; }
.st { width: 38px; height: 38px; border: 2px solid #9a9a9a; border-radius: 50%; display: flex; align-items: center; justify-content: center; font-size: 26px; color: #888; flex: none; }
.st-done { border-color: #5a73d0; color: #5a73d0; }
.st-cur { border-color: #5a73d0; background: #5a73d0; color: #fff; font-weight: 700; }
.sl { font-size: 24px; color: #999; margin-left: 10px; white-space: nowrap; }
.sl-on { color: #5a73d0; }
.ln { width: 119px; height: 2px; background: #aaa; margin: 0 16px; flex: none; }
.ln-on { background: #5a73d0; }
.ln-2 { margin: 0 20px 0 16px; }
.ln-3 { margin: 0 16px 0 12px; width: 122px; }
.card { margin-left: 48px; height: 312px; background: #fff; padding: 50px 0 0 65px; box-shadow: 0 1px 4px rgba(0,0,0,.06); }
h2 { margin: 0; font-size: 29px; line-height: 38px; font-weight: 700; color: #222; letter-spacing: .4px; }
.frow { display: flex; align-items: center; height: 55px; }
.frow-ip { margin-top: 24px; }
.frow-port { margin-top: 41px; }
.flabel { width: 212px; font-size: 24px; color: #666; flex: none; padding-left: 10px; white-space: nowrap; }
.flabel b { color: #e8564a; font-weight: 400; margin-right: 6px; }
.ipbox { position: relative; width: 399px; height: 55px; border: 2px solid #5a73d0; border-radius: 3px; display: grid; grid-template-columns: 88px 14px 86px 14px 87px 14px 1fr; align-items: center; justify-items: center; font-size: 23px; color: #555; padding-left: 3px; }
.oct { position: relative; }
.cursor { position: absolute; right: -2px; top: 0; width: 2px; height: 32px; background: #333; }
.dot { font-weight: 700; }
.redbox { position: absolute; left: -19px; right: -33px; top: -30px; bottom: -21px; border: 10px solid #f00; z-index: 3; }
.qmark { width: 30px; height: 30px; border: 2px solid #555; border-radius: 50%; margin: 6px 0 0 33px; font-size: 20px; line-height: 26px; text-align: center; color: #555; }
.portbox { width: 399px; height: 55px; border: 2px solid #aaa; border-radius: 3px; font-size: 23px; line-height: 51px; padding-left: 18px; color: #555; }
.actions { height: 160px; background: #fff; flex: none; display: flex; justify-content: flex-end; align-items: flex-start; padding: 48px 166px 0 0; gap: 20px; }
.btn { width: 172px; height: 64px; border-radius: 3px; font-family: inherit; font-size: 24px; border: 2px solid #b5b5b5; background: #fff; color: #333; padding: 0 0 2px; }
.btn-next { background: #5a73c9; border-color: #5a73c9; color: #fff; }
.hw-foot { height: 60px; background: #2a2d33; color: #a8adb8; font-size: 24px; text-align: center; line-height: 60px; flex: none; padding-right: 6px; }
.hscroll { height: 20px; border-top: 1px solid #fff; padding: 1px 0 0 5px; flex: none; background: #eef0f5; border-bottom: 2px solid #fff; }
.hthumb { width: 2197px; height: 15px; border-radius: 8px; background: #5e6273; }
.rtask { height: 80px; background: linear-gradient(90deg, #081a28, #03081b); display: flex; align-items: center; flex: none; padding-left: 33px; color: #fff; position: relative; }
.rtask::after { content: ""; position: absolute; right: 8px; top: 0; bottom: 0; width: 1px; background: #556; }
.rt-win { width: 32px; height: 32px; }
.rt-cell { height: 80px; display: flex; align-items: center; justify-content: center; flex: none; }
.rt-ic { width: 48px; height: 48px; }
.rt-edge { width: 80px; margin-left: 45px; }
.rt-files { width: 80px; margin-left: 19px; border-bottom: 4px solid #76b9ed; }
.rt-files .rt-ic { width: 44px; height: 44px; }
.rt-chrome { width: 95px; margin-left: 11px; background: #37424f; border-bottom: 4px solid #76b9ed; }
.tr { width: 32px; height: 32px; }
.tr-up { width: 24px; height: 14px; }
.tr-globe { margin-left: 20px; }
.tr-spk { margin-left: 16px; }
.tr-pen { margin-left: 22px; }
.rt-ime { font-size: 30px; margin-left: 24px; width: 38px; }
.clock { display: flex; flex-direction: column; align-items: center; font-size: 25px; line-height: 38px; color: #fff; }
.rt-clock { width: 122px; margin: -6px 0 0 12px; }
.nt { position: relative; width: 50px; height: 50px; margin: 0 34px 0 34px; }
.nt svg { width: 50px; height: 50px; }
.nt-n { position: absolute; left: 22px; top: 20px; width: 18px; text-align: center; font: bold 22px/26px "Liberation Sans", sans-serif; color: #fff; }

/* Status + taskbar */
.status { height: 38px; border-top: 2px solid #8a8a8a; display: flex; align-items: center; font-size: 20.500px; padding: 0 0 4px 12px; flex: none; background: #fff; white-space: nowrap; }
.status b { font-size: 21px; letter-spacing: .7px; }
.st-dash { margin: 0 10px 0 12px; }
.st-msg { letter-spacing: -.08px; }
.st-link { color: #1414e6; margin-left: 14px; }
.st-mon { width: 32px; height: 34px; margin-top: 4px; }
.taskbar { height: 74px; background: #000; display: flex; align-items: center; flex: none; color: #fff; }
.tb-start { width: 96px; display: flex; padding-left: 32px; }
.tb-win { width: 32px; height: 32px; }
.tb-search { width: 688px; height: 74px; background: #333; display: flex; align-items: center; padding-left: 19px; flex: none; }
.cortana { width: 42px; height: 44px; border-radius: 50%; border: 5px solid #eee; flex: none; }
.tb-ph { font-size: 28px; color: #b9b9b9; margin-left: 19px; }
.mic { width: 20px; height: 32px; margin-right: 31px; }
.tb-apps { display: flex; align-items: center; padding-left: 28px; gap: 55px; }
.tb-tv { width: 40px; height: 32px; }
.tb-a { width: 44px; height: 44px; }
.tb-e { margin: 0 -1px 0 5px; }
.tb-fld { margin-right: -4px; }
.tr-people { margin-right: 47px; }
.tr-up2 { width: 24px; height: 14px; }
.tr-net { margin-left: 19px; }
.tr-vol { margin-left: 16px; }
.tb-clock { width: 122px; margin-left: 18px; line-height: 37px; }
.nt-host { margin: 0 34px 0 32px; }

/* Overlays */
.wm { position: absolute; inset: 0; pointer-events: none; z-index: 2; }
.wm span { position: absolute; font-family: "Liberation Sans", sans-serif; color: rgba(205, 50, 50, .45); white-space: nowrap; transform-origin: 0 100%; }
.wm1 { left: 998px; top: 1058px; font-size: 111.500px; line-height: 100px; transform: rotate(-31.500deg); }
.wm2 { left: 745px; top: 1368px; font-size: 111px; line-height: 100px; transform: rotate(-32.800deg); }
.activate { position: absolute; left: 2365px; top: 1448px; display: flex; flex-direction: column; color: rgba(150,150,150,.75); pointer-events: none; z-index: 2; }
.act1 { font-size: 38px; line-height: 40px; letter-spacing: 2px; white-space: nowrap; }
.act2 { font-size: 30px; line-height: 40px; margin-top: 5px; white-space: nowrap; letter-spacing: .3px; }
```
